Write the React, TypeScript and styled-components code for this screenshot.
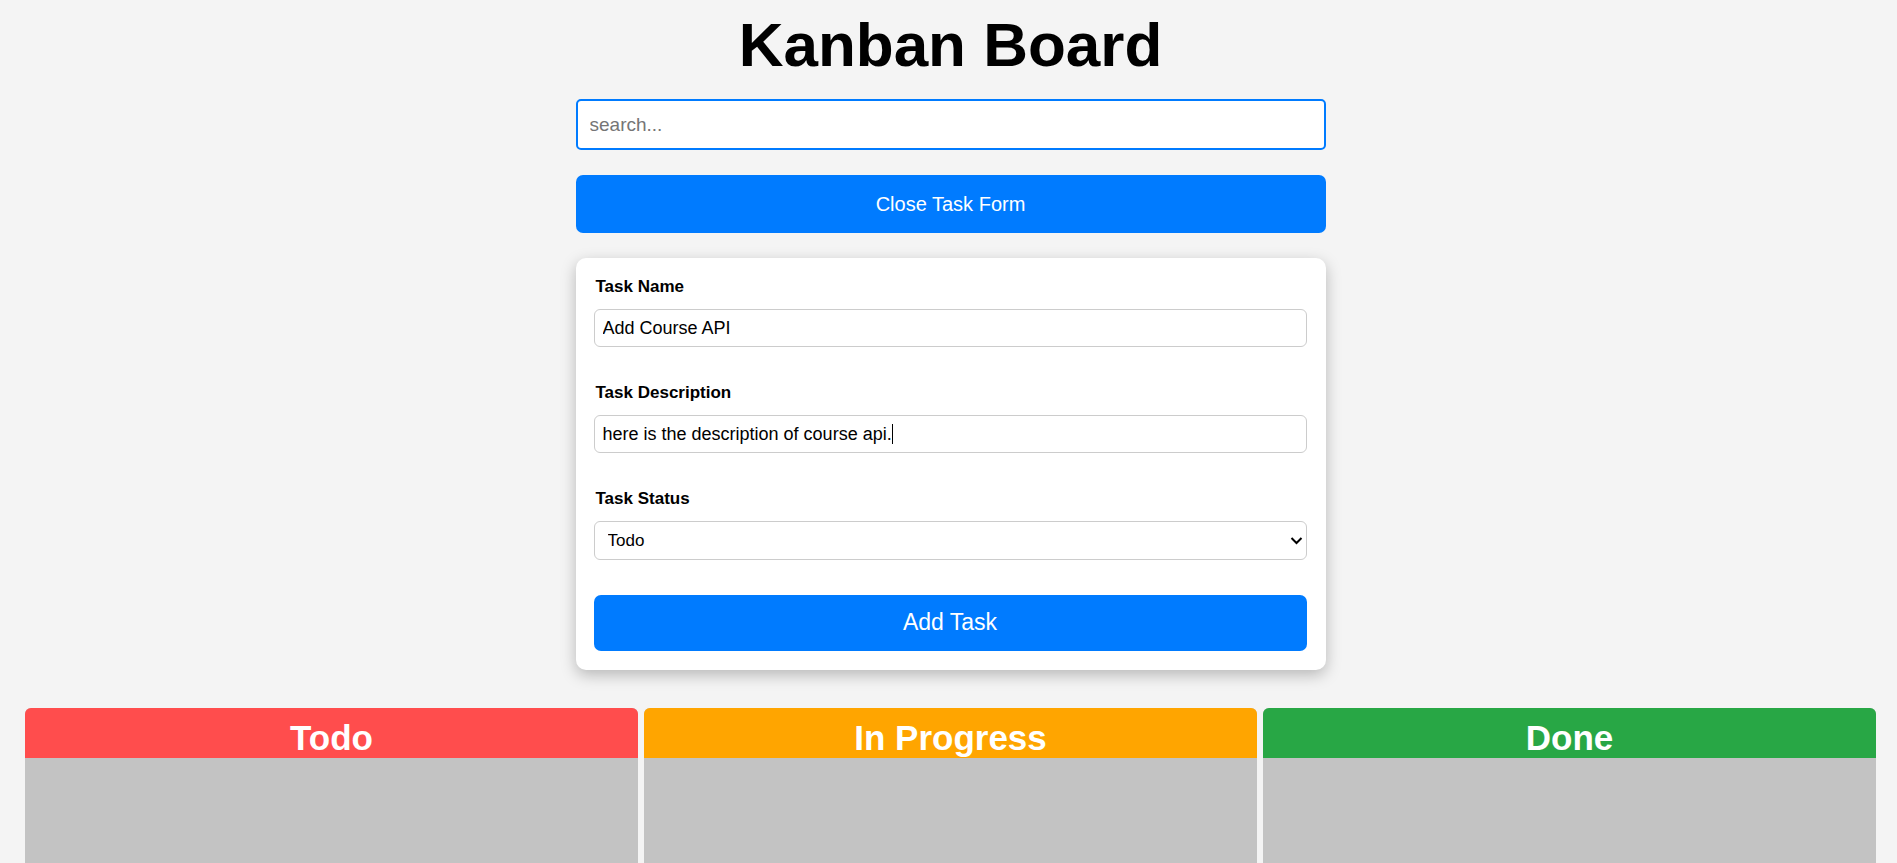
import React, { useLayoutEffect, useRef, useState } from "react";
import styled, { createGlobalStyle } from "styled-components";

const GlobalStyle = createGlobalStyle`
  *, *::before, *::after { box-sizing: border-box; }
  html, body { margin: 0; }
  body {
    background: #f4f4f4;
    color: #000;
    font-family: Arial, "Liberation Sans", sans-serif;
    font-size: 17px;
  }
  input, select, button { font-family: inherit; }
`;

const Page = styled.main`
  display: flex;
  flex-direction: column;
  min-height: 100vh;
  padding: 9px 21px 0 25px;
`;

const Title = styled.h1`
  margin: 0 0 18px;
  font-size: 62px;
  line-height: 72px;
  text-align: center;
`;

const Controls = styled.div`
  display: flex;
  flex-direction: column;
  gap: 25px;
  width: 100%;
  max-width: 750px;
  margin: 0 auto 38px;
`;

const SearchInput = styled.input`
  width: 100%;
  height: 51px;
  padding: 0 12px;
  border: 2px solid #007bff;
  border-radius: 5px;
  background: #fff;
  font-size: 19px;
  outline: none;
  &::placeholder { color: #757575; }
`;

const Button = styled.button<{ $large?: boolean }>`
  width: 100%;
  height: ${(p) => (p.$large ? 56 : 58)}px;
  padding: 0 0 ${(p) => (p.$large ? 2 : 0)}px;
  border: 0;
  border-radius: 7px;
  background: #007bff;
  color: #fff;
  font-size: ${(p) => (p.$large ? 23 : 20)}px;
  cursor: pointer;
`;

const TaskForm = styled.form`
  padding: 18px 19px 19px 18px;
  border-radius: 10px;
  background: #fff;
  box-shadow: 0 5px 15px rgba(0, 0, 0, 0.25);
`;

const Field = styled.div`
  display: flex;
  flex-direction: column;
  gap: 12px;
  margin-bottom: 35px;
`;

const Label = styled.label`
  padding: 0 2px;
  font-weight: bold;
  line-height: 21px;
`;

const InputWrap = styled.div`
  position: relative;
  display: flex;
`;

const TextInput = styled.input`
  flex: 1;
  min-width: 0;
  height: 38px;
  padding: 0 8px;
  border: 1px solid #ccc;
  border-radius: 6px;
  background: #fff;
  color: #000;
  font-size: 18px;
  outline: none;
  caret-color: transparent;
`;

const Caret = styled.span`
  position: absolute;
  top: 9px;
  width: 1px;
  height: 20px;
  background: #000;
  pointer-events: none;
`;

const Select = styled.select`
  flex: 1;
  min-width: 0;
  height: 39px;
  padding: 0 24px 0 13px;
  border: 1px solid #ccc;
  border-radius: 6px;
  background: #fff;
  color: #000;
  font-size: 17px;
  appearance: none;
`;

const Chevron = styled.svg`
  position: absolute;
  top: 14px;
  right: 4px;
  width: 13px;
  height: 11px;
  fill: none;
  stroke: #000;
  stroke-width: 2;
  pointer-events: none;
`;

const Board = styled.div`
  display: grid;
  grid-template-columns: repeat(3, 1fr);
  gap: 6px;
  flex: 1;
`;

const Column = styled.section`
  display: flex;
  flex-direction: column;
  overflow: hidden;
  border-radius: 6px 6px 0 0;
  background: #c3c3c3;
`;

const ColumnTitle = styled.h2<{ $color: string }>`
  height: 50px;
  margin: 0;
  padding-top: 10px;
  background: ${(p) => p.$color};
  color: #fff;
  font-size: 35px;
  line-height: 40px;
  text-align: center;
`;

const columns = [
  { name: "Todo", color: "#ff4d4d" },
  { name: "In Progress", color: "#ffa500" },
  { name: "Done", color: "#28a745" },
];

type TextFieldProps = {
  id: string;
  label: string;
  value: string;
  onChange: (value: string) => void;
  autoFocus?: boolean;
};

/* A labelled text box that draws its own steady caret while it has focus. */
function TextField({ id, label, value, onChange, autoFocus = false }: TextFieldProps) {
  const ref = useRef<HTMLInputElement>(null);
  const [focused, setFocused] = useState(autoFocus);
  const [position, setPosition] = useState(value.length);
  const [left, setLeft] = useState(0);

  useLayoutEffect(() => {
    const input = ref.current;
    if (!autoFocus || !input) return;
    input.focus();
    input.setSelectionRange(input.value.length, input.value.length);
  }, [autoFocus]);

  useLayoutEffect(() => {
    const input = ref.current;
    const context = document.createElement("canvas").getContext("2d");
    if (!input || !context) return;
    const style = getComputedStyle(input);
    context.font = `${style.fontSize} ${style.fontFamily}`;
    const textWidth = context.measureText(value.slice(0, position)).width;
    setLeft(Math.round(9 + textWidth - input.scrollLeft));
  }, [value, position]);

  return (
    <Field>
      <Label htmlFor={id}>{label}</Label>
      <InputWrap>
        <TextInput
          ref={ref}
          id={id}
          type="text"
          value={value}
          onChange={(e) => onChange(e.target.value)}
          onSelect={(e) => setPosition(e.currentTarget.selectionStart ?? value.length)}
          onFocus={() => setFocused(true)}
          onBlur={() => setFocused(false)}
        />
        {focused && <Caret aria-hidden="true" style={{ left }} />}
      </InputWrap>
    </Field>
  );
}

export default function App() {
  const [search, setSearch] = useState("");
  const [name, setName] = useState("Add Course API");
  const [description, setDescription] = useState("here is the description of course api.");
  const [status, setStatus] = useState("Todo");
  const [open, setOpen] = useState(true);

  return (
    <>
      <GlobalStyle />
      <Page>
        <Title>Kanban Board</Title>
        <Controls>
          <SearchInput
            type="text"
            aria-label="Search tasks"
            placeholder="search..."
            value={search}
            onChange={(e) => setSearch(e.target.value)}
          />
          <Button type="button" onClick={() => setOpen(!open)}>
            {open ? "Close Task Form" : "Open Task Form"}
          </Button>
          {open && (
            <TaskForm onSubmit={(e) => e.preventDefault()}>
              <TextField id="task-name" label="Task Name" value={name} onChange={setName} />
              <TextField
                id="task-description"
                label="Task Description"
                value={description}
                onChange={setDescription}
                autoFocus
              />
              <Field>
                <Label htmlFor="task-status">Task Status</Label>
                <InputWrap>
                  <Select id="task-status" value={status} onChange={(e) => setStatus(e.target.value)}>
                    {columns.map((c) => (
                      <option key={c.name}>{c.name}</option>
                    ))}
                  </Select>
                  <Chevron viewBox="0 0 13 11" aria-hidden="true">
                    <path d="M1.5 3l5 5 5-5" />
                  </Chevron>
                </InputWrap>
              </Field>
              <Button type="submit" $large>Add Task</Button>
            </TaskForm>
          )}
        </Controls>
        <Board>
          {columns.map((c) => (
            <Column key={c.name}>
              <ColumnTitle $color={c.color}>{c.name}</ColumnTitle>
            </Column>
          ))}
        </Board>
      </Page>
    </>
  );
}
